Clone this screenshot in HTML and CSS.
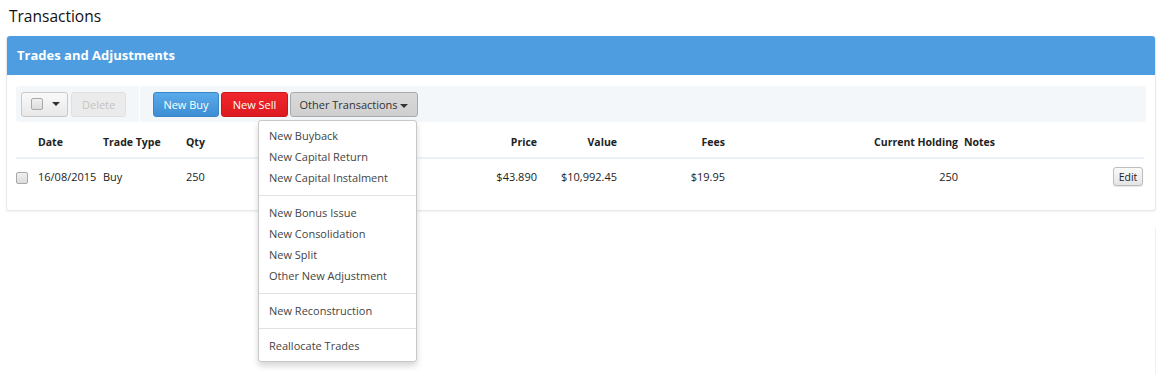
FILE: index.html
```html
<!DOCTYPE html>
<html lang="en">
<head>
    <meta charset="UTF-8">
    <meta name="viewport" content="width=device-width, initial-scale=1.0">
    <title>Transactions</title>
    <link rel="stylesheet" href="styles.css">
</head>
<body>
    <h1 class="page-title">Transactions</h1>
    <div class="panel">
        <div class="panel-heading">Trades and Adjustments</div>
        <div class="panel-body">
            <div class="toolbar">
                <div class="toolbar-left">
                    <button class="btn btn-select"><span class="check"></span><span class="caret"></span></button>
                    <button class="btn btn-disabled">Delete</button>
                </div>
                <div class="toolbar-right">
                    <button class="btn btn-buy">New Buy</button>
                    <button class="btn btn-sell">New Sell</button>
                    <div class="dropdown">
                        <button class="btn btn-other">Other Transactions <span class="caret"></span></button>
                        <ul class="dropdown-menu">
                            <li>New Buyback</li>
                            <li>New Capital Return</li>
                            <li>New Capital Instalment</li>
                            <li class="divider"></li>
                            <li>New Bonus Issue</li>
                            <li>New Consolidation</li>
                            <li>New Split</li>
                            <li>Other New Adjustment</li>
                            <li class="divider"></li>
                            <li>New Reconstruction</li>
                            <li class="divider"></li>
                            <li>Reallocate Trades</li>
                        </ul>
                    </div>
                </div>
            </div>
            <table class="trades">
                <colgroup>
                    <col class="c-sel">
                    <col class="c-date">
                    <col class="c-type">
                    <col class="c-qty">
                    <col class="c-blank">
                    <col class="c-price">
                    <col class="c-value">
                    <col class="c-fees">
                    <col class="c-hold">
                    <col class="c-notes">
                    <col class="c-edit">
                </colgroup>
                <thead>
                    <tr>
                        <th></th>
                        <th>Date</th>
                        <th>Trade Type</th>
                        <th>Qty</th>
                        <th></th>
                        <th class="num">Price</th>
                        <th class="num">Value</th>
                        <th class="num">Fees</th>
                        <th class="num">Current Holding</th>
                        <th class="notes">Notes</th>
                        <th></th>
                    </tr>
                </thead>
                <tbody>
                    <tr>
                        <td><span class="check"></span></td>
                        <td>16/08/2015</td>
                        <td>Buy</td>
                        <td>250</td>
                        <td></td>
                        <td class="num">$43.890</td>
                        <td class="num">$10,992.45</td>
                        <td class="num">$19.95</td>
                        <td class="num">250</td>
                        <td class="notes"></td>
                        <td class="edit"><button class="btn btn-edit">Edit</button></td>
                    </tr>
                </tbody>
            </table>
        </div>
    </div>
    <div class="side-rule"></div>
</body>
</html>
```

FILE: styles.css
```css
html, body {
    min-height: 374px;
}
body {
    margin: 0;
    padding: 0 8px 0 6px;
    font-family: "Open Sans", "Noto Sans", sans-serif;
    font-size: 11px;
    color: #222;
    background: #fff;
}
.page-title {
    margin: 0;
    padding: 6px 3px 0;
    height: 36px;
    box-sizing: border-box;
    font-size: 15.5px;
    font-weight: normal;
    line-height: 20px;
    color: #111;
}
.panel {
    width: 1148px;
    background: #fff;
    border: 1px solid #e6e9ed;
    border-top: none;
    border-radius: 3px;
    box-shadow: 0 1px 2px rgba(0,0,0,0.06);
}
.panel-heading {
    height: 39px;
    line-height: 39px;
    padding-left: 10px;
    background: #4d9de0;
    color: #fff;
    font-size: 13px;
    font-weight: bold;
    border-radius: 3px 3px 0 0;
}
.panel-body {
    padding: 11px 9px 16px 9px;
}
.toolbar {
    display: flex;
    gap: 1px;
    height: 36px;
}
.toolbar-left, .toolbar-right {
    display: flex;
    align-items: center;
    background: #f4f7fa;
}
.toolbar-left {
    width: 118px;
    gap: 3px;
    padding-left: 5px;
    border-radius: 3px 0 0 3px;
}
.toolbar-right {
    flex: 1;
    gap: 2px;
    padding-left: 13px;
    border-radius: 0 3px 3px 0;
}
.btn {
    font-family: inherit;
    font-size: 11px;
    height: 25px;
    padding: 0 10px;
    border: 1px solid #c8c8c8;
    border-radius: 3px;
    cursor: pointer;
}
.btn-select {
    width: 47px;
    display: flex;
    align-items: center;
    gap: 9px;
    padding: 0 0 0 9px;
    background: linear-gradient(#fafafa, #e8e8e8);
}
.btn-disabled {
    width: 55px;
    background: #ebebeb;
    border-color: #e0e0e0;
    color: #c4c4c4;
}
.btn-buy {
    width: 66px;
    padding: 0;
    color: #fff;
    background: linear-gradient(#5aabea, #3d8dd3);
    border-color: #3b86c8;
}
.btn-sell {
    width: 67px;
    padding: 0;
    color: #fff;
    background: linear-gradient(#f0272d, #dc1a1f);
    border-color: #c9171c;
}
.btn-other {
    width: 128px;
    padding: 0;
    color: #333;
    background: linear-gradient(#d9d9d9, #cfcfcf);
    border-color: #a9a9a9;
}
.caret {
    display: inline-block;
    width: 0;
    height: 0;
    border-left: 4px solid transparent;
    border-right: 4px solid transparent;
    border-top: 4px solid #333;
    vertical-align: middle;
}
.check {
    display: inline-block;
    width: 10px;
    height: 10px;
    border: 1px solid #a8a8a8;
    border-radius: 2px;
    background: linear-gradient(#f0f0f0, #dcdcdc);
    vertical-align: middle;
}
.dropdown {
    position: relative;
}
.dropdown-menu {
    position: absolute;
    top: 28px;
    left: -32px;
    width: 157px;
    margin: 0;
    padding: 4px 0 5px;
    list-style: none;
    background: #fff;
    border: 1px solid #c8c8c8;
    border-radius: 3px;
    box-shadow: 0 4px 6px rgba(0,0,0,0.16);
    z-index: 5;
}
.dropdown-menu li {
    height: 21px;
    line-height: 21px;
    padding-left: 10px;
    color: #444;
    white-space: nowrap;
}
.dropdown-menu .divider {
    height: 1px;
    margin: 7px 0 6px;
    padding: 0;
    background: #e2e2e2;
}
.trades {
    width: 1128px;
    table-layout: fixed;
    border-collapse: collapse;
    margin-top: 4px;
}
.c-sel { width: 18px; }
.c-date { width: 65px; }
.c-type { width: 83px; }
.c-qty { width: 78px; }
.c-blank { width: 180px; }
.c-price { width: 101px; }
.c-value { width: 80px; }
.c-fees { width: 108px; }
.c-hold { width: 233px; }
.c-notes { width: 138px; }
.c-edit { width: 44px; }
.trades th {
    height: 31px;
    padding: 0 4px;
    text-align: left;
    font-weight: bold;
    font-size: 10.5px;
    border-bottom: 2px solid #eaf1f8;
    white-space: nowrap;
}
.trades td {
    height: 35px;
    padding: 0 4px;
    white-space: nowrap;
}
.trades th:first-child, .trades td:first-child {
    padding: 0;
}
.trades .num {
    text-align: right;
}
.trades .notes {
    padding-left: 2px;
}
.trades .edit {
    text-align: right;
    padding-right: 1px;
}
.btn-edit {
    height: 19px;
    width: 30px;
    padding: 0;
    font-size: 10.5px;
    color: #222;
    background: linear-gradient(#fafafa, #e4e4e4);
    border-color: #bdbdbd;
    box-shadow: 0 1px 1px rgba(0,0,0,0.1);
}
.side-rule {
    position: absolute;
    left: 1155px;
    top: 227px;
    bottom: 0;
    width: 1px;
    background: #f0f0f0;
}
```
